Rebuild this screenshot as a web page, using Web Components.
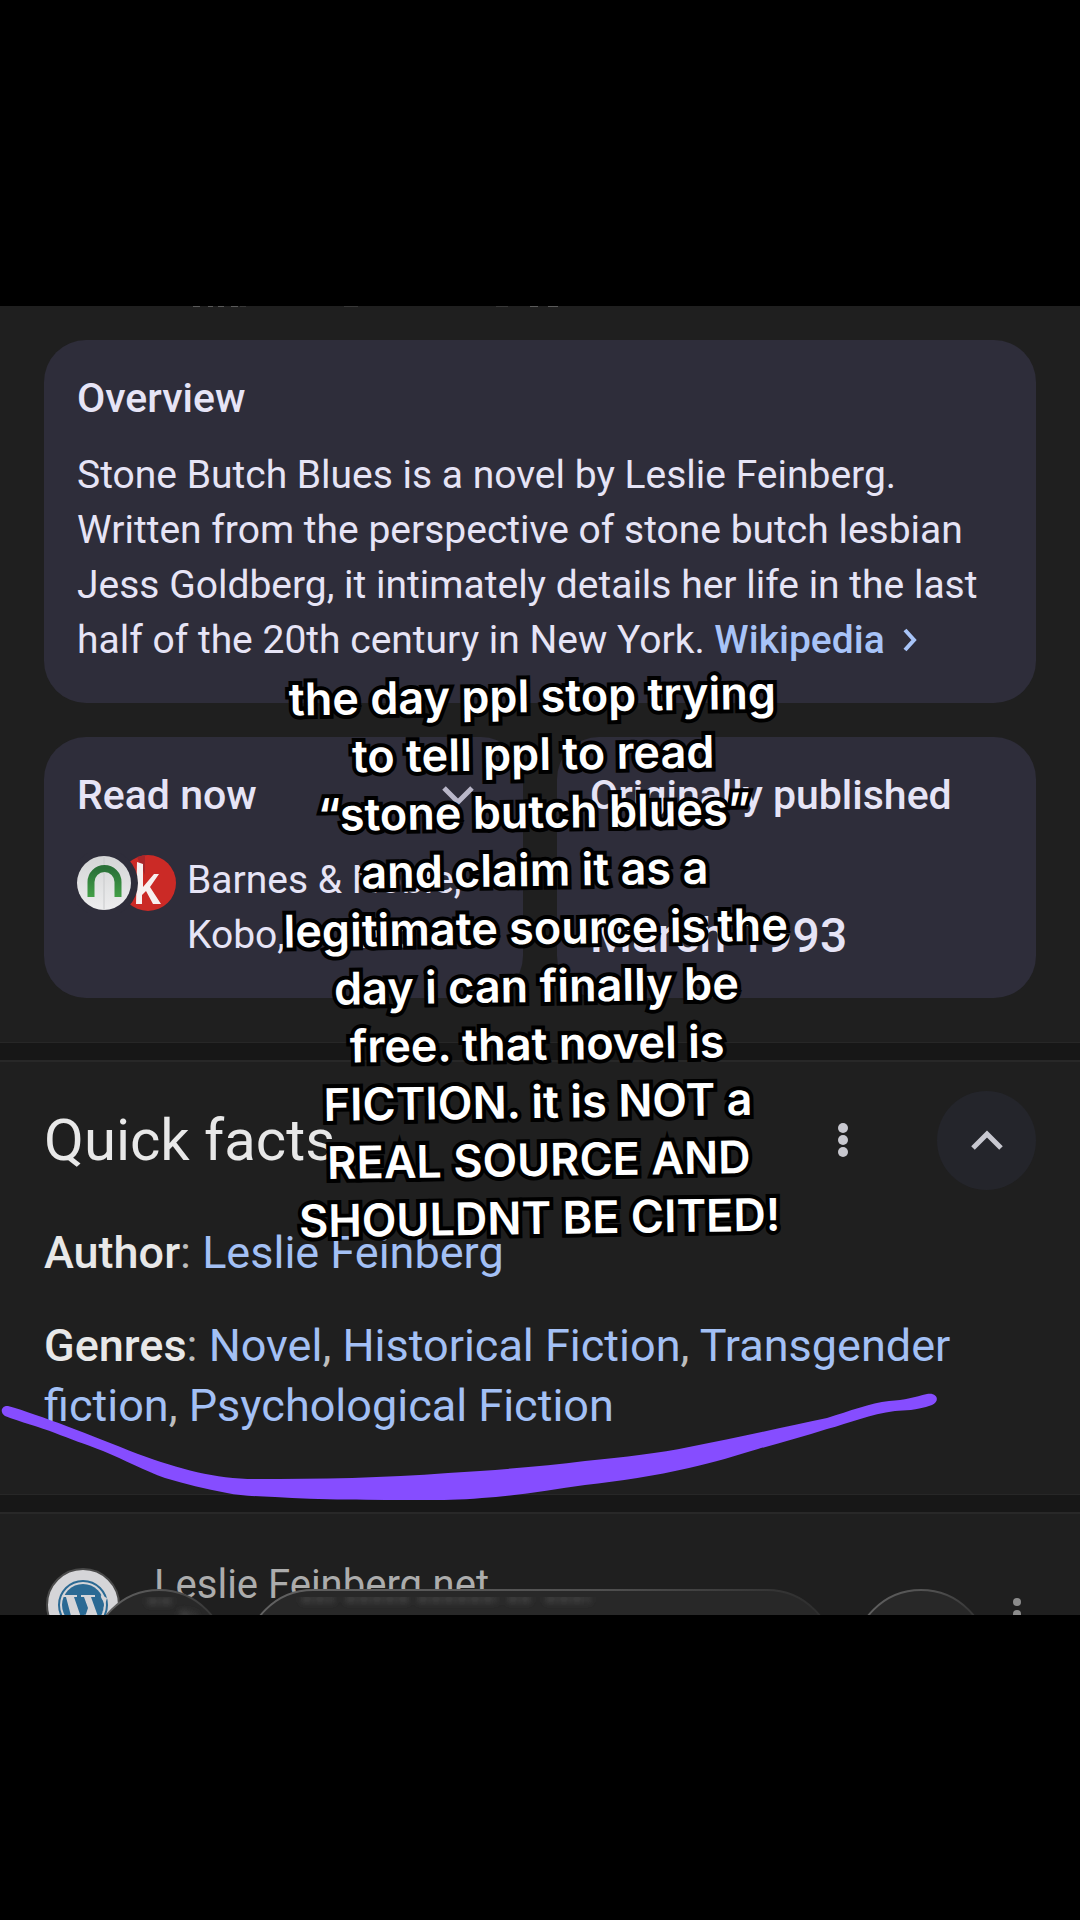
<!DOCTYPE html>
<html lang="en">
<head>
<meta charset="utf-8">
<title>Stone Butch Blues</title>
<style>
    body {
        margin: 0;
        min-height: 100vh;
        background-color: #000;
        display: flex;
        flex-direction: column;
        justify-content: center;
        font-family: Roboto, "Liberation Sans", sans-serif;
    }
</style>
</head>
<body>
<story-photo>
    <top-fragments></top-fragments>

    <card-grid>
        <info-card wide>
            <span slot="title">Overview</span>
            <card-text>Stone Butch Blues is a novel by Leslie Feinberg.<br>Written from the perspective of stone butch lesbian<br>Jess Goldberg, it intimately details her life in the last<br>half of the 20th century in New York. <more-link href="#wikipedia">Wikipedia</more-link></card-text>
        </info-card>
        <info-card expandable>
            <span slot="title">Read now</span>
            <store-list>Barnes &amp; Noble,<br>Kobo, &amp; 1 more</store-list>
        </info-card>
        <info-card large>
            <span slot="title">Originally published</span>
            <span>March 1993</span>
        </info-card>
    </card-grid>

    <section-band></section-band>

    <quick-facts heading="Quick facts">
        <fact-row label="Author" values="Leslie Feinberg"></fact-row>
        <fact-row label="Genres" values="Novel|Historical Fiction|Transgender fiction|Psychological Fiction"></fact-row>
    </quick-facts>

    <section-band></section-band>

    <site-result>Leslie Feinberg.net</site-result>

    <browser-bar slot="over"></browser-bar>
    <marker-stroke slot="over"></marker-stroke>
    <photo-caption slot="over">the day ppl stop trying<br>to tell ppl to read<br>“stone butch blues”<br>and claim it as a<br>legitimate source is the<br>day i can finally be<br>free. that novel is<br>FICTION. it is NOT a<br>REAL SOURCE AND<br>SHOULDNT BE CITED!</photo-caption>
</story-photo>

<script>
const attach = (element, html) => {
    const template = document.createElement("template")
    template.innerHTML = html
    element.attachShadow({ mode: "open" })
    element.shadowRoot.appendChild(template.content.cloneNode(true))
}

// Cropped frame that everything sits in
class StoryPhoto extends HTMLElement {
    constructor() {
        super();
        attach(this, `
            <style>
                :host {
                    display: block;
                    position: relative;
                    overflow: hidden;
                    background-color: #1f1f1f;
                }
                .content {
                    display: flex;
                    flex-direction: column;
                }
            </style>
            <div class="content"><slot></slot></div>
            <slot name="over"></slot>
        `)
    }
}

// Bottom edge of the text that was scrolled past
class TopFragments extends HTMLElement {
    constructor() {
        super();
        attach(this, `
            <style>
                :host { display: block; height: 34px; }
                svg { display: block; width: 100%; height: 2px; }
            </style>
            <svg viewBox="0 0 1080 2" preserveAspectRatio="none" stroke="#5a5a5a" stroke-width="2">
                <path d="M193 0h7M208 0h5M218 0h6M231 0h7M530 0h8M548 0h10"/>
                <path d="M240 0h6M344 0h14M496 0h12" stroke="#383838"/>
            </svg>
        `)
    }
}

class CardGrid extends HTMLElement {
    constructor() {
        super();
        attach(this, `
            <style>
                :host {
                    display: grid;
                    grid-template-columns: 1fr 1fr;
                    gap: 34px;
                    padding: 0 44px 44px;
                }
            </style>
            <slot></slot>
        `)
    }
}

class InfoCard extends HTMLElement {
    constructor() {
        super();
        attach(this, `
            <style>
                :host {
                    display: flex;
                    flex-direction: column;
                    gap: 33px;
                    min-width: 0;
                    box-sizing: border-box;
                    padding: 33px 33px 35px;
                    border-radius: 42px;
                    background-color: #2e2d3a;
                    color: #e6e4f6;
                    font-size: 39px;
                    line-height: 55px;
                }
                :host([wide]) {
                    grid-column: 1 / -1;
                    gap: 25px;
                }
                :host([large]) {
                    justify-content: space-between;
                    font-size: 48px;
                    font-weight: 500;
                }
                header {
                    display: flex;
                    align-items: center;
                    justify-content: space-between;
                }
                h2 {
                    margin: 0;
                    font-size: 41px;
                    font-weight: 500;
                    line-height: 50px;
                    white-space: nowrap;
                }
                button {
                    display: none;
                    border: 0;
                    padding: 0 14px 0 0;
                    background: none;
                }
                :host([expandable]) button { display: block; }
                svg { display: block; }
            </style>
            <header>
                <h2><slot name="title"></slot></h2>
                <button aria-label="Expand">
                    <svg width="36" height="24" fill="none" stroke="#b9b7c9" stroke-width="5"><path d="M4 5l14 14 14-14"/></svg>
                </button>
            </header>
            <slot></slot>
        `)
    }
}

class CardText extends HTMLElement {
    constructor() {
        super();
        attach(this, `
            <style>
                :host { display: block; white-space: nowrap; }
            </style>
            <slot></slot>
        `)
    }
}

class MoreLink extends HTMLElement {
    constructor() {
        super();
        attach(this, `
            <style>
                :host { display: inline; }
                a {
                    color: #a8c4f8;
                    font-weight: 500;
                    text-decoration: none;
                }
                svg { margin-left: 16px; }
            </style>
            <a><slot></slot><svg width="18" height="26" fill="none" stroke="currentColor" stroke-width="4"><path d="M4 3l9 10-9 10"/></svg></a>
        `)
        this.shadowRoot.querySelector("a").href = this.getAttribute("href")
    }
}

class StoreList extends HTMLElement {
    constructor() {
        super();
        attach(this, `
            <style>
                :host {
                    display: flex;
                    align-items: flex-start;
                    gap: 11px;
                    white-space: nowrap;
                }
                svg { flex: none; }
            </style>
            <svg width="99" height="60" viewBox="0 0 99 60">
                <defs>
                    <linearGradient id="silver" x2="0" y2="1">
                        <stop offset="0" stop-color="#d4d5d6"/>
                        <stop offset="1" stop-color="#ededee"/>
                    </linearGradient>
                    <linearGradient id="leaf" x2="0" y2="1">
                        <stop offset="0" stop-color="#2a7038"/>
                        <stop offset="1" stop-color="#43a047"/>
                    </linearGradient>
                </defs>
                <circle cx="71" cy="30" r="28" fill="#cb2a26"/>
                <path d="M60 4l8-2v20z" fill="#a8262a"/>
                <path d="M60 9l6 2v23l11-13h5l-9 13 11 17h-8l-7-13-4 4v9h-6z" fill="#f7f0f0"/>
                <circle cx="27" cy="30" r="34" fill="#2e2d3a"/>
                <circle cx="27" cy="30" r="27" fill="url(#silver)"/>
                <path d="M27 3v54" stroke="#c9cacc"/>
                <path d="M14 44V29a13 13 0 0 1 27 0v15" fill="none" stroke="url(#leaf)" stroke-width="7"/>
            </svg>
            <div><slot></slot></div>
        `)
    }
}

class SectionBand extends HTMLElement {
    constructor() {
        super();
        attach(this, `
            <style>
                :host {
                    display: block;
                    height: 17px;
                    background-color: #171717;
                    border-top: 1px solid #272727;
                    border-bottom: 2px solid #282828;
                }
            </style>
        `)
    }
}

class QuickFacts extends HTMLElement {
    constructor() {
        super();
        attach(this, `
            <style>
                :host {
                    display: flex;
                    flex-direction: column;
                    gap: 33px;
                    padding: 29px 44px 58px;
                }
                header {
                    display: flex;
                    align-items: center;
                    gap: 80px;
                }
                h1 {
                    flex: 1;
                    margin: 0;
                    color: #e8e8e8;
                    font-size: 58px;
                    font-weight: 400;
                    line-height: 64px;
                }
                button {
                    display: flex;
                    align-items: center;
                    justify-content: center;
                    border: 0;
                    padding: 0;
                    background: none;
                }
                .collapse {
                    width: 99px;
                    height: 99px;
                    border-radius: 50%;
                    background-color: #24252b;
                }
            </style>
            <header>
                <h1></h1>
                <button aria-label="More options">
                    <svg width="28" height="40" fill="#c8c8cf"><circle cx="14" cy="8" r="5"/><circle cx="14" cy="20" r="5"/><circle cx="14" cy="32" r="5"/></svg>
                </button>
                <button class="collapse" aria-label="Collapse">
                    <svg width="36" height="24" fill="none" stroke="#c8c8d0" stroke-width="5"><path d="M4 20L18 6l14 14"/></svg>
                </button>
            </header>
            <slot></slot>
        `)
        this.shadowRoot.querySelector("h1").textContent = this.getAttribute("heading")
    }
}

class FactRow extends HTMLElement {
    constructor() {
        super();
        const links = this.getAttribute("values").split("|")
            .map(value => `<a href="#">${value}</a>`)
            .join(", ")
        attach(this, `
            <style>
                :host {
                    display: block;
                    color: #bdbdbd;
                    font-size: 45px;
                    line-height: 60px;
                }
                b {
                    color: #e8e8e8;
                    font-weight: 500;
                }
                a {
                    color: #a3c0f5;
                    text-decoration: none;
                }
            </style>
            <b>${this.getAttribute("label")}</b>: ${links}
        `)
    }
}

class SiteResult extends HTMLElement {
    constructor() {
        super();
        attach(this, `
            <style>
                :host {
                    display: flex;
                    align-items: flex-start;
                    gap: 34px;
                    height: 52px;
                    padding: 49px 46px 0;
                    color: #acacac;
                    font-size: 40px;
                    line-height: 44px;
                }
                .name { flex: 1; }
                svg { flex: none; }
            </style>
            <svg width="74" height="80" viewBox="0 -3 74 80">
                <circle cx="37" cy="39" r="36" fill="#d5d5d8" stroke="#4a4a4a" stroke-width="2"/>
                <circle cx="37" cy="39" r="24" fill="#d5d5d8" stroke="#2b6a94" stroke-width="2"/>
                <circle cx="37" cy="39" r="21" fill="#2b6a94"/>
                <path d="M17 29h14v2h-3l9 26 5-15-4-11h-3v-2h14v2h-4l9 25 4-16c1-5-4-7-3-11l6 3-10 33h-5l-7-17-6 17h-4L20 31h-3z" fill="#d5d5d8"/>
            </svg>
            <div class="name"><slot></slot></div>
            <svg width="34" height="60" fill="#8c8c8c"><circle cx="17" cy="39" r="4"/><circle cx="17" cy="51" r="4"/></svg>
        `)
    }
}

// Floating browser controls, cut off by the frame
class BrowserBar extends HTMLElement {
    constructor() {
        super();
        attach(this, `
            <style>
                :host {
                    position: absolute;
                    left: 0;
                    right: 0;
                    bottom: 0;
                    height: 26px;
                    overflow: hidden;
                }
                svg { display: block; width: 100%; height: 134px; }
            </style>
            <svg viewBox="0 0 1080 134" preserveAspectRatio="none">
                <defs>
                    <linearGradient id="rim" x2="1" y2="0">
                        <stop offset="0" stop-color="#626262"/>
                        <stop offset=".6" stop-color="#505050"/>
                        <stop offset="1" stop-color="#2c2c2c"/>
                    </linearGradient>
                    <filter id="soft"><feGaussianBlur stdDeviation="3"/></filter>
                </defs>
                <g fill="#282828" stroke="url(#rim)" stroke-width="2">
                    <circle cx="159" cy="68" r="67"/>
                    <rect x="246" y="1" width="588" height="134" rx="67"/>
                    <circle cx="921" cy="68" r="67"/>
                </g>
                <g stroke="#444" stroke-width="7" filter="url(#soft)">
                    <path d="M148 12h26M180 25l16 2M302 10h32M346 10h64M418 10h80M508 10h22M546 10h44" stroke-dasharray="10 3"/>
                </g>
            </svg>
        `)
    }
}

class MarkerStroke extends HTMLElement {
    constructor() {
        super();
        attach(this, `
            <style>
                :host {
                    position: absolute;
                    left: 0;
                    right: 0;
                    bottom: 112px;
                    pointer-events: none;
                }
                svg { display: block; width: 100%; }
            </style>
            <svg viewBox="0 1390 1080 112" fill="#864dff">
                <path d="M8 1405C40 1414 90 1434 138 1453C180 1468 215 1478 255 1478C320 1478 385 1477 448 1472C500 1469 545 1465 585 1460C625 1456 660 1452 689 1446C735 1437 785 1426 827 1417C850 1410 870 1402 889 1400C905 1399 915 1396 927 1393C938 1391 940 1401 932 1404C915 1410 905 1409 895 1410C870 1413 850 1422 827 1428C805 1435 780 1442 758 1448C735 1455 715 1461 689 1467C655 1475 620 1480 585 1484C550 1489 515 1495 482 1497C460 1499 440 1499 427 1499C370 1499 320 1499 275 1496C255 1495 240 1495 227 1492C205 1488 185 1483 165 1477C145 1470 125 1459 103 1450C85 1443 70 1438 55 1432C40 1426 20 1421 5 1415C-1 1411 2 1404 8 1405z"/>
            </svg>
        `)
    }
}

class PhotoCaption extends HTMLElement {
    constructor() {
        super();
        attach(this, `
            <style>
                :host {
                    position: absolute;
                    left: 0;
                    right: 8px;
                    top: 361px;
                    color: #fff;
                    font-family: Inter, sans-serif;
                    font-size: 45px;
                    font-weight: 600;
                    line-height: 58px;
                    text-align: center;
                    white-space: nowrap;
                    transform: rotate(-0.8deg);
                    -webkit-text-stroke: 8px #000;
                    paint-order: stroke fill;
                    stroke-linejoin: round;
                }
            </style>
            <slot></slot>
        `)
    }
}

customElements.define("story-photo", StoryPhoto)
customElements.define("top-fragments", TopFragments)
customElements.define("card-grid", CardGrid)
customElements.define("info-card", InfoCard)
customElements.define("card-text", CardText)
customElements.define("more-link", MoreLink)
customElements.define("store-list", StoreList)
customElements.define("section-band", SectionBand)
customElements.define("quick-facts", QuickFacts)
customElements.define("fact-row", FactRow)
customElements.define("site-result", SiteResult)
customElements.define("browser-bar", BrowserBar)
customElements.define("marker-stroke", MarkerStroke)
customElements.define("photo-caption", PhotoCaption)
</script>
</body>
</html>
